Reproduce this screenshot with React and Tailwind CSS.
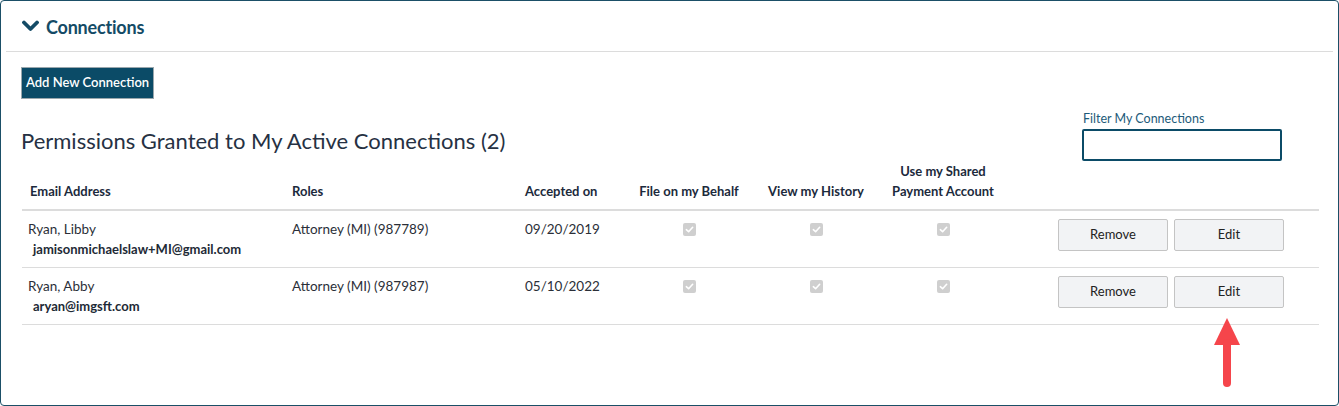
import React from 'react';

const connections = [
  { name: 'Ryan, Libby', email: 'jamisonmichaelslaw+MI@gmail.com', role: 'Attorney (MI) (987789)', accepted: '09/20/2019' },
  { name: 'Ryan, Abby', email: 'aryan@imgsft.com', role: 'Attorney (MI) (987987)', accepted: '05/10/2022' },
];

const DisabledCheck = () => (
  <span className="flex mx-auto w-[13px] h-[13px] rounded-[2px] bg-[#cfcfcf] items-center justify-center">
    <svg width="9" height="9" viewBox="0 0 10 10">
      <path d="M1.5 5.2 L4 7.5 L8.5 2.5" fill="none" stroke="#fff" strokeWidth="1.8" strokeLinecap="round" strokeLinejoin="round" />
    </svg>
  </span>
);

const App = () => {
  return (
    <div className="w-[1339px] h-[406px] bg-white font-['Lato','Open_Sans',sans-serif]">
      <div className="relative h-full border border-[#1b4f67] rounded-[4px] overflow-hidden">
        {/* Section header */}
        <div className="flex items-center h-[51px] pt-[3px] pl-[16px] mx-[5px] border-b border-[#dcdcdc]">
          <svg width="17" height="12" viewBox="0 0 17 12" className="mt-[-3px]">
            <path d="M2 2.5 L8.5 9 L15 2.5" fill="none" stroke="#144b66" strokeWidth="3.8" strokeLinecap="round" strokeLinejoin="round" />
          </svg>
          <span className="ml-[7px] text-[18px] font-bold text-[#144b66] tracking-[-0.2px]">Connections</span>
        </div>

        <div className="px-[20px] pt-[15px]">
          <button className="h-[32px] px-[4px] bg-[#0b4b67] border border-[#9aa7ad] text-white text-[13px] font-semibold">
            Add New Connection
          </button>

          <div className="flex items-end justify-between pr-[36px] mt-[12px]">
            <h2 className="text-[22px] text-[#263143] leading-none mb-[9px]">Permissions Granted to My Active Connections (2)</h2>
            <div className="w-[200px]">
              <label className="block text-[12.5px] leading-[16px] text-[#1d5b7a] ml-[1px]">Filter My Connections</label>
              <input type="text" className="w-full h-[32px] mt-[2px] border-2 border-[#0b4b67] rounded-[2px] outline-none" />
            </div>
          </div>

          <table className="table-fixed w-[1297px] ml-[1px] border-collapse text-[13.5px]">
            <colgroup>
              <col className="w-[262px]" />
              <col className="w-[233px]" />
              <col className="w-[110px]" />
              <col className="w-[124px]" />
              <col className="w-[130px]" />
              <col className="w-[124px]" />
              <col />
            </colgroup>
            <thead>
              <tr className="border-b-2 border-[#dcdcdc] text-[#1c2a3c] text-[13px] font-bold align-bottom leading-[20px]">
                <th className="h-[46px] pb-[8px] pl-[8px] text-left font-bold">Email Address</th>
                <th className="pb-[8px] pl-[8px] text-left font-bold">Roles</th>
                <th className="pb-[8px] pl-[8px] text-left font-bold">Accepted on</th>
                <th className="pb-[8px] text-center font-bold">File on my Behalf</th>
                <th className="pb-[8px] text-center font-bold">View my History</th>
                <th className="pb-[8px] text-center font-bold">Use my Shared<br />Payment Account</th>
                <th></th>
              </tr>
            </thead>
            <tbody>
              {connections.map((c) => (
                <tr key={c.email} className="border-b border-[#dcdcdc] align-top text-[#2b2f38]">
                  <td className="h-[57px] pt-[10px] pl-[6px]">
                    <div className="leading-[16px]">{c.name}</div>
                    <div className="leading-[20px] mt-[2px] pl-[5px] font-bold text-[#1e2a36] text-[13px]">{c.email}</div>
                  </td>
                  <td className="pt-[10px] pl-[8px] leading-[16px]">{c.role}</td>
                  <td className="pt-[10px] pl-[8px] leading-[16px]">{c.accepted}</td>
                  <td className="pt-[12px]"><DisabledCheck /></td>
                  <td className="pt-[12px]"><DisabledCheck /></td>
                  <td className="pt-[12px]"><DisabledCheck /></td>
                  <td className="pt-[8px] pr-[35px]">
                    <div className="flex justify-end gap-[6px]">
                      <button className="w-[110px] h-[32px] bg-[#f2f3f5] border border-[#c4c4c4] rounded-[2px] text-[#222] text-[13px]">Remove</button>
                      <button className="w-[110px] h-[32px] bg-[#f2f3f5] border border-[#c4c4c4] rounded-[2px] text-[#222] text-[13px]">Edit</button>
                    </div>
                  </td>
                </tr>
              ))}
            </tbody>
          </table>
        </div>

        {/* annotation arrow */}
        <svg className="absolute left-[1212px] top-[317px]" width="28" height="70" viewBox="0 0 28 70">
          <polygon points="14,0 27,27 1,27" fill="#f5454b" />
          <line x1="14" y1="25" x2="14" y2="65" stroke="#f5454b" strokeWidth="8" strokeLinecap="round" />
        </svg>
      </div>
    </div>
  );
};

export default App;
